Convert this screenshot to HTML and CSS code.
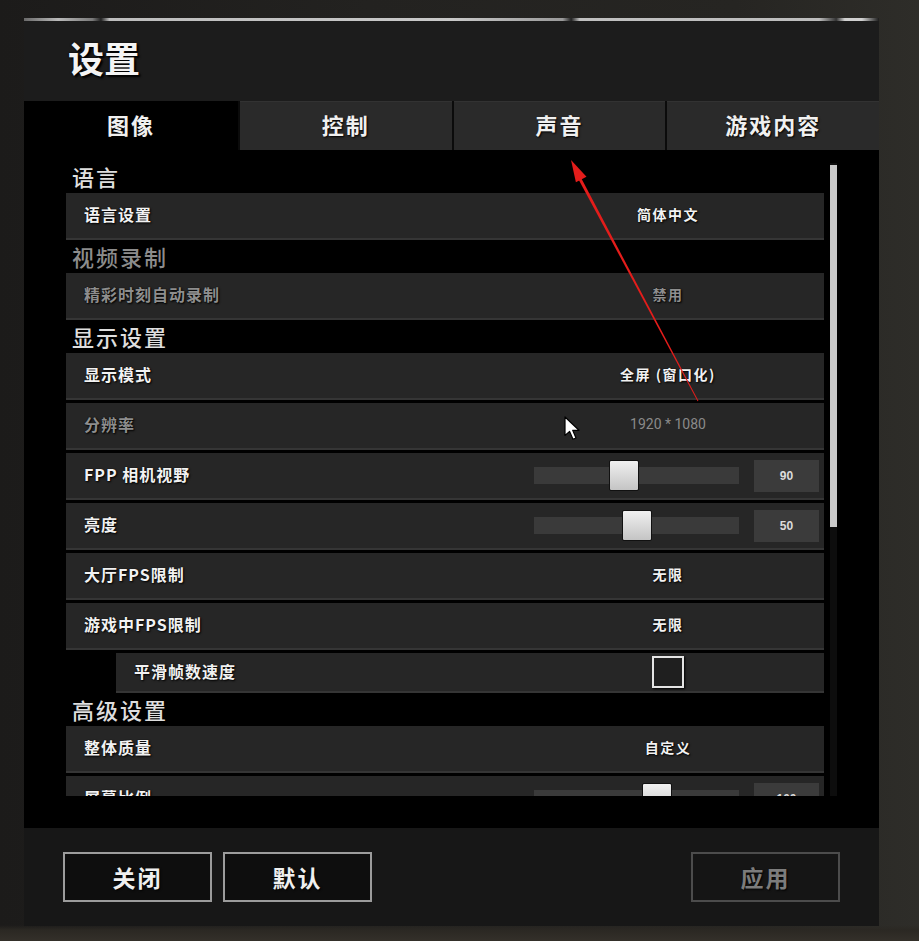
FILE: index.html
```html
<!DOCTYPE html>
<html>
    <head>
        <meta charset="utf-8">
        <title>设置</title>
        <link rel="stylesheet" href="styles.css">
    </head>
    <body>
        <div class="screen">
            <div class="dialog">
                <div class="topline"></div>
                <div class="head">
                    <p class="title">设置</p>
                </div>

                <div class="tabs">
                    <div class="tab active">图像</div>
                    <div class="tab">控制</div>
                    <div class="tab">声音</div>
                    <div class="tab">游戏内容</div>
                </div>

                <div class="content">
                    <div class="list">
                        <div class="section">语言</div>
                        <div class="row">
                            <span class="label">语言设置</span>
                            <span class="val">简体中文</span>
                        </div>

                        <div class="section off">视频录制</div>
                        <div class="row">
                            <span class="label off">精彩时刻自动录制</span>
                            <span class="val off">禁用</span>
                        </div>

                        <div class="section">显示设置</div>
                        <div class="row">
                            <span class="label">显示模式</span>
                            <span class="val">全屏 (窗口化)</span>
                        </div>
                        <div class="row">
                            <span class="label off">分辨率</span>
                            <span class="val num">1920 * 1080</span>
                        </div>
                        <div class="row">
                            <span class="label">FPP 相机视野</span>
                            <div class="slider">
                                <div class="track"><div class="knob" style="left: 75px"></div></div>
                                <div class="box">90</div>
                            </div>
                        </div>
                        <div class="row">
                            <span class="label">亮度</span>
                            <div class="slider">
                                <div class="track"><div class="knob" style="left: 88px"></div></div>
                                <div class="box">50</div>
                            </div>
                        </div>
                        <div class="row">
                            <span class="label">大厅FPS限制</span>
                            <span class="val">无限</span>
                        </div>
                        <div class="row">
                            <span class="label">游戏中FPS限制</span>
                            <span class="val">无限</span>
                        </div>
                        <div class="row sub">
                            <span class="label">平滑帧数速度</span>
                            <span class="val"><span class="check"></span></span>
                        </div>

                        <div class="section">高级设置</div>
                        <div class="row">
                            <span class="label">整体质量</span>
                            <span class="val">自定义</span>
                        </div>
                        <div class="row">
                            <span class="label">屏幕比例</span>
                            <div class="slider">
                                <div class="track"><div class="knob" style="left: 108px"></div></div>
                                <div class="box">100</div>
                            </div>
                        </div>
                    </div>
                    <div class="scroll"><div class="thumb"></div></div>
                </div>

                <div class="footer">
                    <button class="btn">关闭</button>
                    <button class="btn">默认</button>
                    <button class="btn apply">应用</button>
                </div>
            </div>

            <svg class="overlay" width="919" height="941" viewBox="0 0 919 941">
                <!-- red annotation arrow -->
                <polygon fill="#e41d1b" points="581.3,178.3 578.7,179.7 697.6,401.2 698.4,400.8"/>
                <polygon fill="#e41d1b" points="571,160 586.5,176.7 575.9,182.3"/>
                <!-- mouse pointer -->
                <path d="M565 417 L565 435.5 L569.6 431.4 L573 439.3 L576 438 L572.7 430.3 L579 430.3 Z"
                    fill="#fff" stroke="#000" stroke-width="1.2" stroke-linejoin="round"/>
            </svg>
        </div>
    </body>
</html>
```

FILE: styles.css
```css
body{
    margin: 0;
    background-color: #222120;
    font-family: "Noto Sans CJK SC", "Noto Sans", sans-serif;
}
.screen{
    position: relative;
    width: 919px;
    height: 941px;
    overflow: hidden;
    box-sizing: border-box;
    padding-top: 18px;
    background:
        linear-gradient(to bottom, rgba(0,0,0,0) 0, rgba(0,0,0,0) 925px, #2b2823 930px, #34302a 941px),
        linear-gradient(to right, #1c1b1a 0, #232220 40%, #262522 80%, #2e2d29 100%);
}
.dialog{
    margin-left: 24px;
    width: 855px;
}
.topline{
    height: 3px;
    background: linear-gradient(to right,
        #6a6a6a 0, #b9b9b9 4%, #7a7a7a 8%, #222 9%, #bdbdbd 10%,
        #c8c8c8 50%, #9a9a9a 63%, #222 64%, #c0c0c0 65%,
        #bdbdbd 93%, #333 95%, #d0d0d0 96%, #d0d0d0 98%, #1c1c1c 100%);
}
.head{
    height: 80px;
    background-color: #1c1c1c;
    padding-left: 44px;
    box-sizing: border-box;
    padding-top: 18px;
}
.title{
    margin: 0;
    font-size: 36px;
    line-height: 36px;
    font-weight: bold;
    color: #f4f4f4;
    text-shadow: 2px 2px 2px #000, 0 0 2px #000;
}
.tabs{
    display: flex;
    height: 49px;
    background-color: #0b0b0b;
}
.tab{
    flex: 1;
    margin-left: 2px;
    background-color: #2a2a2a;
    border-top: 1px solid #323232;
    box-sizing: border-box;
    color: #f0f0f0;
    font-size: 22px;
    font-weight: bold;
    letter-spacing: 2px;
    line-height: 44px;
    text-align: center;
    text-shadow: 1px 1px 2px #000;
}
.tab.active{
    flex: none;
    width: 214px;
    margin-left: 0;
    background-color: #000;
    border-top-color: #000;
}
.content{
    display: flex;
    height: 678px;
    background-color: #000;
    box-sizing: border-box;
    padding: 7px 0 0 42px;
}
.list{
    width: 758px;
    height: 639px;
    box-sizing: border-box;
    padding-top: 6px;
    overflow: hidden;
}
.section{
    height: 30px;
    line-height: 26px;
    padding-left: 6px;
    font-size: 22px;
    font-weight: 500;
    letter-spacing: 2px;
    color: #dedede;
}
.section.off{
    color: #8c8c8c;
}
.row{
    display: flex;
    align-items: center;
    height: 42px;
    margin-bottom: 3px;
    padding: 0 0 3px 18px;
    background-color: #262626;
    border-bottom: 2px solid #353535;
}
.row.sub{
    height: 35px;
    margin-left: 50px;
}
.label{
    flex: none;
    width: 450px;
    font-size: 16px;
    font-weight: bold;
    letter-spacing: 1px;
    color: #f2f2f2;
    text-shadow: 1px 1px 2px #000, 0 0 1px #000;
}
.row.sub .label{
    width: 400px;
}
.val{
    display: flex;
    justify-content: center;
    width: 268px;
    font-size: 14px;
    font-weight: bold;
    letter-spacing: 1.5px;
    color: #f2f2f2;
    text-shadow: 1px 1px 2px #000, 0 0 1px #000;
}
.off{
    color: #8e8e8e;
}
.val.num{
    font-family: Roboto, "Liberation Sans", sans-serif;
    font-weight: normal;
    letter-spacing: 0;
    color: #8a8a8a;
    text-shadow: none;
}
.check{
    width: 32px;
    height: 32px;
    margin-top: 3px;
    box-sizing: border-box;
    border: 2px solid #e4e4e4;
    background-color: #1f1f1f;
    box-shadow: 1px 1px 2px #000;
}
.slider{
    display: flex;
    align-items: center;
    margin-top: 3px;
}
.track{
    position: relative;
    width: 205px;
    height: 17px;
    background-color: #3a3a3a;
}
.knob{
    position: absolute;
    top: -7px;
    width: 30px;
    height: 31px;
    box-sizing: border-box;
    border: 1px solid #111;
    border-radius: 2px;
    background: linear-gradient(to bottom, #f0f0f0, #c4c4c4);
}
.box{
    width: 65px;
    height: 32px;
    margin-left: 15px;
    background-color: #3b3b3b;
    color: #dcdcdc;
    font-family: "Liberation Sans", Arial, sans-serif;
    font-size: 12px;
    font-weight: bold;
    line-height: 32px;
    text-align: center;
}
.scroll{
    width: 7px;
    height: 633px;
    margin: 6px 0 0 6px;
    background-color: #0d0d0d;
}
.thumb{
    margin-top: 2px;
    height: 362px;
    background-color: #c9c9c9;
}
.footer{
    display: flex;
    height: 98px;
    box-sizing: border-box;
    padding: 24px 39px 0;
    background-color: #171717;
}
.btn{
    width: 149px;
    height: 50px;
    margin-right: 11px;
    box-sizing: border-box;
    border: 2px solid #9c9c9c;
    background-color: #0e0e0e;
    color: #efefef;
    font-family: "Noto Sans CJK SC", sans-serif;
    font-size: 23px;
    font-weight: bold;
    letter-spacing: 2px;
    text-shadow: 1px 1px 2px #000;
    cursor: pointer;
}
.btn.apply{
    margin-left: auto;
    margin-right: 0;
    border-color: #4c4c4c;
    background-color: #151515;
    color: #7c7c7c;
}
.overlay{
    position: absolute;
    top: 0;
    left: 0;
    pointer-events: none;
}
```
